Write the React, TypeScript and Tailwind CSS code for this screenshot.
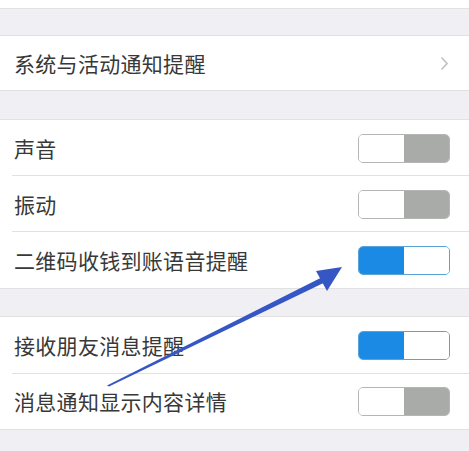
import React from "react";

type ToggleProps = { on?: boolean };

function Toggle({ on = false }: ToggleProps) {
  // iOS-style old switch: two halves, one coloured
  return (
    <div
      className={`flex h-[29px] w-[92px] overflow-hidden rounded-[5px] border ${
        on ? "border-[#5aa3d6]" : "border-[#b4b6b3]"
      }`}
    >
      <div className={`flex-1 ${on ? "bg-[#1b8ae5]" : "bg-white"}`} />
      <div className={`flex-1 ${on ? "bg-white" : "bg-[#a8aba7]"}`} />
    </div>
  );
}

function Row({
  label,
  h,
  divider,
  children,
}: {
  label: string;
  h: string;
  divider?: boolean;
  children?: React.ReactNode;
}) {
  return (
    <div className={`relative flex items-center justify-between bg-white pl-[14px] pr-[19px] ${h}`}>
      <span className="text-[21px] leading-none tracking-[0.3px] text-[#383838]">{label}</span>
      {children}
      {divider && <div className="absolute bottom-0 left-[12px] right-0 h-px bg-[#e1e1e1]" />}
    </div>
  );
}

export default function App() {
  return (
    <main
      className="relative h-[451px] w-[470px] overflow-hidden bg-[#f0eff4] border-r border-[#d4d4d4]"
      style={{ fontFamily: '"Noto Sans CJK SC", "Noto Sans", sans-serif' }}
    >
      <div className="flex flex-col">
        {/* bottom of previous group */}
        <div className="h-[9px] border-b border-[#e1e1e1] bg-white" />
        <div className="h-[26px]" />

        {/* system notifications */}
        <div className="border-y border-[#e1e1e1]">
          <Row label="系统与活动通知提醒" h="h-[54px]">
            <svg width="9" height="15" viewBox="0 0 9 15" className="mr-[1px]">
              <path d="M1.5 1.5 L7 7.5 L1.5 13.5" fill="none" stroke="#c4c4c8" strokeWidth="1.8" />
            </svg>
          </Row>
        </div>
        <div className="h-[28px]" />

        {/* sound group */}
        <div className="border-y border-[#e1e1e1]">
          <Row label="声音" h="h-[56px]" divider>
            <Toggle />
          </Row>
          <Row label="振动" h="h-[56px]" divider>
            <Toggle />
          </Row>
          <Row label="二维码收钱到账语音提醒" h="h-[56px]">
            <Toggle on />
          </Row>
        </div>
        <div className="h-[27px]" />

        {/* friend messages group */}
        <div className="border-y border-[#e1e1e1]">
          <Row label="接收朋友消息提醒" h="h-[57px]" divider>
            <Toggle on />
          </Row>
          <Row label="消息通知显示内容详情" h="h-[55px]">
            <Toggle />
          </Row>
        </div>
      </div>

      {/* annotation arrow drawn over the screenshot */}
      <svg className="pointer-events-none absolute left-0 top-0" width="470" height="451" viewBox="0 0 470 451">
        <polygon points="107,385.5 109,386.5 323.5,283 320.5,278" fill="#3556c4" />
        <polygon points="342,267 316,271 327,291" fill="#3556c4" />
      </svg>
    </main>
  );
}
